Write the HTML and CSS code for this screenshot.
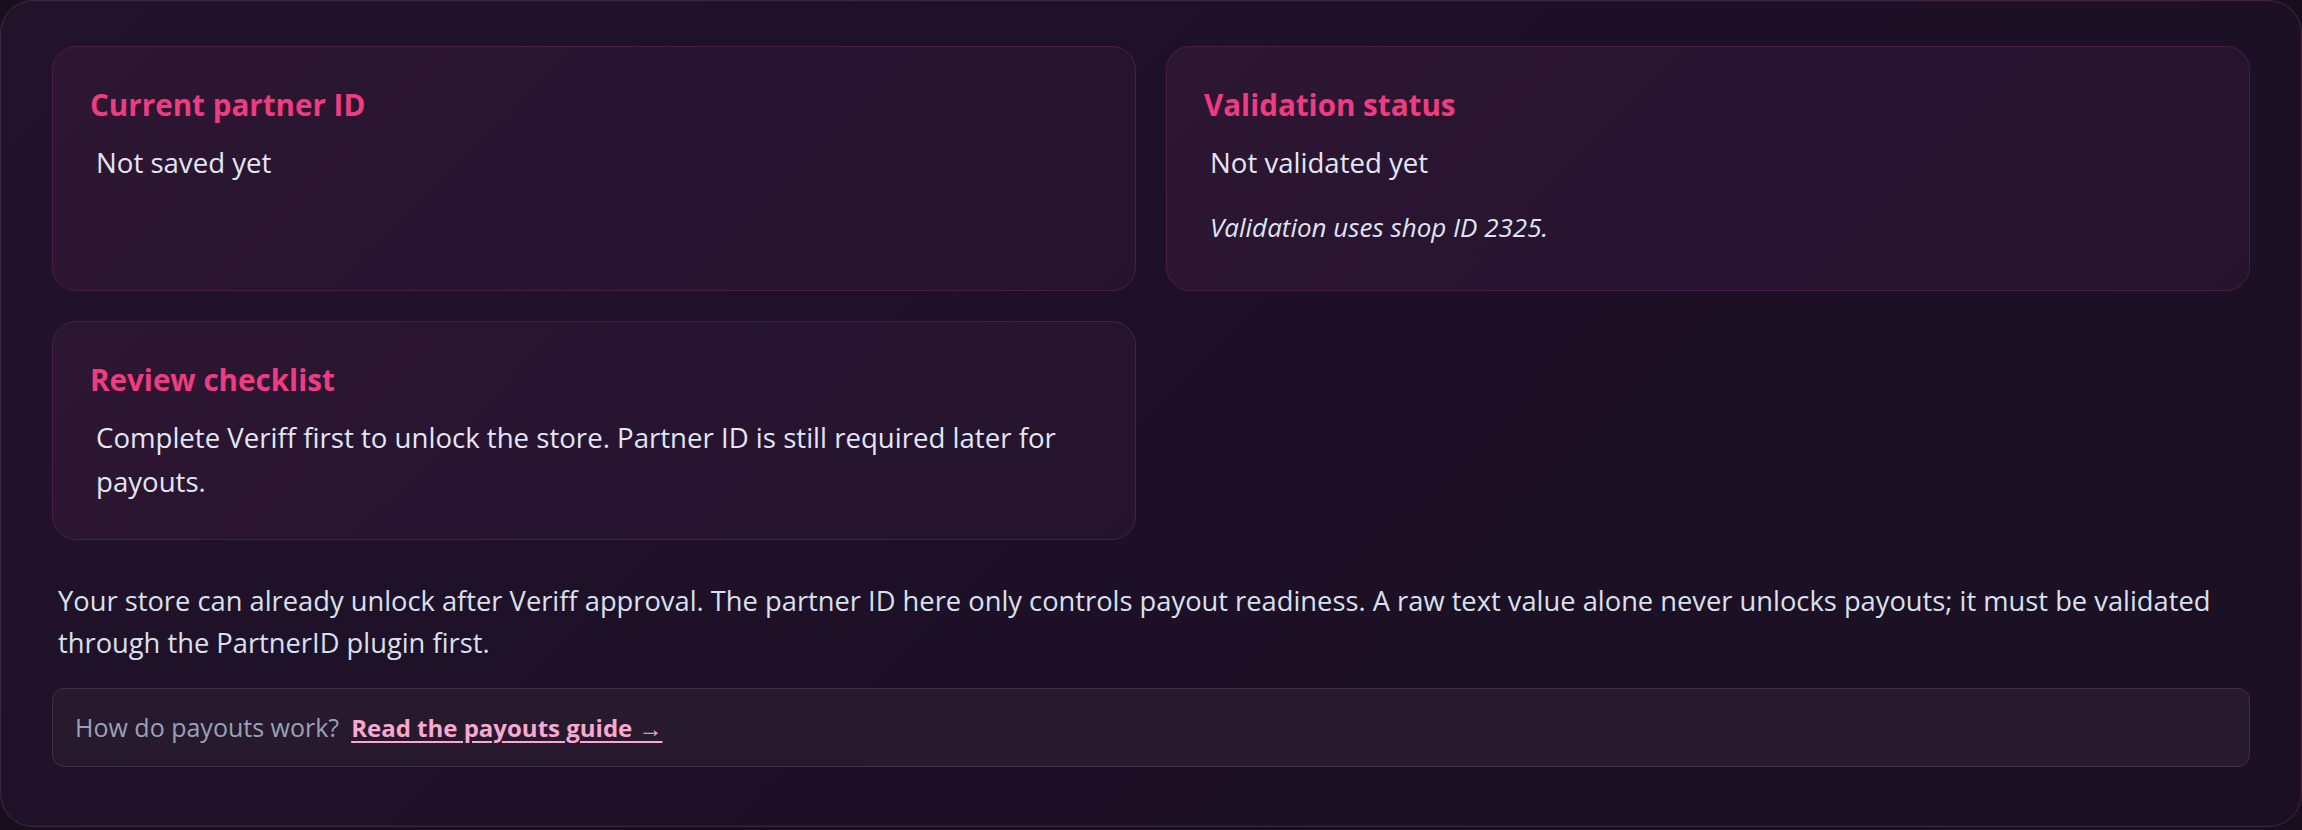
FILE: index.html
```html
<!DOCTYPE html>
<html lang="en">
<head>
<meta charset="utf-8">
<title>Partner ID</title>
<link rel="stylesheet" href="styles.css">
</head>
<body>
<section class="panel">
  <div class="cards">
    <div class="card">
      <h3 class="card-title">Current partner ID</h3>
      <p class="card-value">Not saved yet</p>
    </div>
    <div class="card">
      <h3 class="card-title">Validation status</h3>
      <p class="card-value">Not validated yet</p>
      <p class="card-note">Validation uses shop ID 2325.</p>
    </div>
    <div class="card">
      <h3 class="card-title">Review checklist</h3>
      <p class="card-value">Complete Veriff first to unlock the store. Partner ID is still required later for payouts.</p>
    </div>
  </div>
  <p class="info">Your store can already unlock after Veriff approval. The partner ID here only controls payout readiness. A raw text value alone never unlocks payouts; it must be validated through the PartnerID plugin first.</p>
  <div class="guide">
    <span class="guide-q">How do payouts work?</span>
    <a class="guide-link" href="#">Read the payouts guide →</a>
  </div>
</section>
</body>
</html>
```
FILE: styles.css
```css
* { box-sizing: border-box; }
html, body {
  margin: 0;
  padding: 0;
  background: #180f1e;
}
body {
  font-family: "Open Sans", "Noto Sans", sans-serif;
  color: #e2e8f0;
}
.panel {
  width: 100%;
  border: 1.5px solid #3f2442;
  border-radius: 33px;
  background: linear-gradient(135deg, #21142a 0%, #1d1026 60%, #1b1023 100%);
  padding: 45px 51px 59px 51px;
  box-shadow: inset 0 0 0 1px rgba(120, 60, 120, 0.08);
}
.cards {
  display: grid;
  grid-template-columns: 1fr 1fr;
  gap: 30px;
}
.card {
  border: 1.5px solid #4d1c46;
  border-radius: 24px;
  background: linear-gradient(135deg, #2d1631 0%, #281430 50%, #25132c 100%);
  padding: 39px 37px 36px 37px;
}
.card-title {
  margin: 0;
  font-size: 29.6px;
  line-height: 38px;
  font-weight: 700;
  color: #ef3b80;
}
.card-value {
  margin: 16px 0 0 0;
  padding-left: 6px;
  font-size: 27.6px;
  line-height: 44px;
  color: #e1e7f5;
}
.card-note {
  margin: 24px 0 7.5px 0;
  padding-left: 6px;
  font-size: 26px;
  line-height: 38px;
  font-style: italic;
  color: #dfe5f3;
}
.info {
  margin: 40px 0 0 0;
  padding: 0 6px;
  font-size: 27.3px;
  line-height: 42px;
  color: #d9e0ee;
}
.guide {
  margin-top: 24.5px;
  border: 1.5px solid #3d3146;
  border-radius: 12px;
  background: #271a2f;
  padding: 21px 22px 21px 22px;
  font-size: 25px;
  line-height: 34px;
  display: flex;
  align-items: baseline;
  gap: 12px;
}
.guide-q {
  color: #99a2b6;
}
.guide-link {
  font-size: 24px;
  color: #f9a8cf;
  font-weight: 700;
  text-decoration: underline;
  text-underline-offset: 4px;
}
```
